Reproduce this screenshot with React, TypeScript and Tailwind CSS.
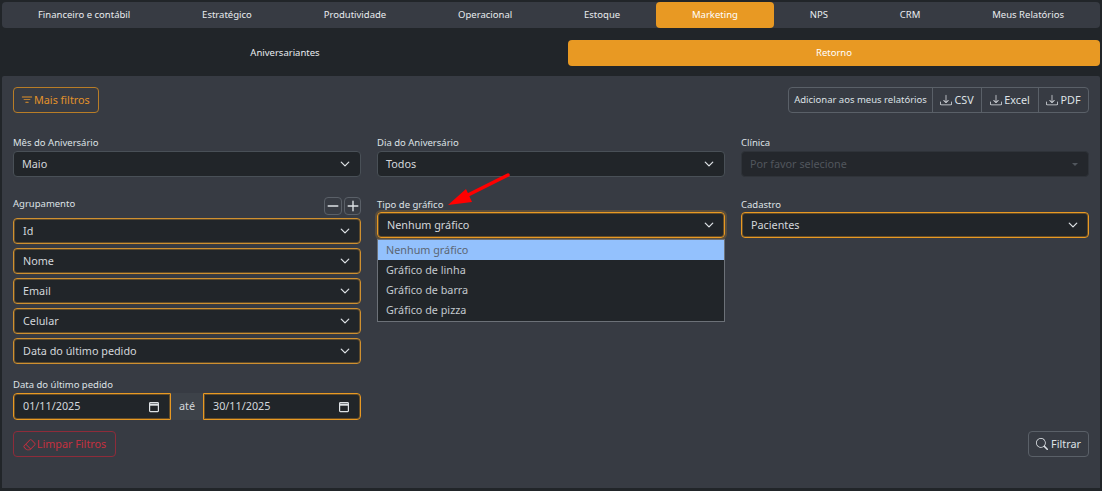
import { BsDash, BsDownload, BsEraser, BsFilter, BsPlus, BsSearch } from "react-icons/bs"

const tabs = ["Financeiro e contábil", "Estratégico", "Produtividade", "Operacional", "Estoque", "Marketing", "NPS", "CRM", "Meus Relatórios"]
const agrupamento = ["Id", "Nome", "Email", "Celular", "Data do último pedido"]
const graficos = ["Nenhum gráfico", "Gráfico de linha", "Gráfico de barra", "Gráfico de pizza"]

function Chevron() {
    return (
        <svg width="10" height="10" viewBox="0 0 16 16" fill="none" stroke="#dee2e6" strokeWidth="2" strokeLinecap="round" strokeLinejoin="round">
            <path d="m2 5 6 6 6-6" />
        </svg>
    )
}

function Calendar() {
    return (
        <svg width="12" height="12" viewBox="0 0 12 12" fill="none" stroke="#dee2e6" strokeWidth="1.2">
            <rect x="1.6" y="1.6" width="8.8" height="9" rx="0.8" />
            <path d="M1.6 3.7h8.8" strokeWidth="2" />
        </svg>
    )
}

function Select({ value, tone }: { value: string; tone?: "bright" | "dim" }) {
    const border =
        tone === "bright"
            ? "pl-[9px] border border-[#e89923] shadow-[inset_0_0_0_1px_rgba(232,153,35,0.35)]"
            : tone === "dim"
              ? "pl-[9px] border border-[#cf9030] shadow-[inset_0_0_0_1px_rgba(207,144,48,0.35)]"
              : "pl-[8px] border border-[#495057]"
    return (
        <div className={`h-[26px] flex items-center justify-between pr-[10px] rounded-[4px] bg-[#212529] text-[10.8px] text-[#d3d7db] ${border}`}>
            <span>{value}</span>
            <Chevron />
        </div>
    )
}

function Label({ children }: { children: string }) {
    return <div className="h-[15px] pt-[1px] text-[9.5px] leading-[14px] text-[#dee2e6]">{children}</div>
}

export default function App() {
    return (
        <div className="w-[1102px] h-[491px] overflow-hidden bg-[#212529] px-[2px] pt-[2px] font-['Noto_Sans',sans-serif]">
            {/* main tabs */}
            <div className="flex h-[26px] rounded-[4px] bg-[#373b43] text-[9.5px] text-[#e9ecef]">
                {tabs.map((t) => (
                    <div key={t} className={`flex-auto flex items-center justify-center rounded-[4px] px-[8px] ${t === "Marketing" ? "bg-[#e89923] text-white" : ""}`}>
                        {t}
                    </div>
                ))}
            </div>

            {/* sub tabs */}
            <div className="grid grid-cols-[566px_532px] h-[26px] mt-[12px] text-[9.5px] text-[#e9ecef]">
                <div className="flex items-center justify-center">Aniversariantes</div>
                <div className="flex items-center justify-center rounded-[4px] bg-[#e89923] text-white">Retorno</div>
            </div>

            {/* panel */}
            <div className="relative mt-[10px] h-[412px] rounded-t-[2px] bg-[#373b43] px-[11px] pt-[11px]">
                <div className="flex items-start justify-between">
                    <button className="h-[26px] w-[86px] flex items-center pl-[6px] rounded-[4px] border border-[#b87d27] text-[10.8px] text-[#e2922a]">
                        <BsFilter size={14} />
                        Mais filtros
                    </button>
                    <div className="flex h-[26px] rounded-[4px] border border-[#5a6068] text-[#dee2e6]">
                        <div className="w-[143px] flex items-center justify-center text-[9.5px]">Adicionar aos meus relatórios</div>
                        <div className="w-[49px] flex items-center justify-center gap-[2px] border-l border-[#5a6068] text-[10.8px]"><BsDownload size={12} />CSV</div>
                        <div className="w-[57px] flex items-center justify-center gap-[2px] border-l border-[#5a6068] text-[10.8px]"><BsDownload size={12} />Excel</div>
                        <div className="w-[50px] flex items-center justify-center gap-[2px] border-l border-[#5a6068] text-[10.8px]"><BsDownload size={12} />PDF</div>
                    </div>
                </div>

                <div className="grid grid-cols-3 gap-x-[16px] mt-[22px]">
                    <div>
                        <Label>Mês do Aniversário</Label>
                        <div className="mt-[1px]"><Select value="Maio" /></div>
                    </div>
                    <div>
                        <Label>Dia do Aniversário</Label>
                        <div className="mt-[1px]"><Select value="Todos" /></div>
                    </div>
                    <div>
                        <Label>Clínica</Label>
                        <div className="mt-[1px] h-[26px] flex items-center justify-between pl-[8px] pr-[10px] rounded-[4px] border border-[#2f3339] bg-[#24272c] text-[10.8px] text-[#51565d]">
                            <span>Por favor selecione</span>
                            <span className="border-x-[3px] border-t-[3px] border-x-transparent border-t-[#51565d]" />
                        </div>
                    </div>
                </div>

                <div className="grid grid-cols-3 gap-x-[16px] mt-[20px]">
                    <div>
                        <div className="flex items-start justify-between h-[18px]">
                            <div className="text-[9.5px] leading-[14px] text-[#dee2e6]">Agrupamento</div>
                            <div className="flex gap-[2px]">
                                <div className="w-[18px] h-[18px] flex items-center justify-center rounded-[4px] border border-[#5a6068] text-[#dee2e6]"><BsDash size={22} className="shrink-0" /></div>
                                <div className="w-[17px] h-[18px] flex items-center justify-center rounded-[4px] border border-[#5a6068] text-[#dee2e6]"><BsPlus size={22} className="shrink-0" /></div>
                            </div>
                        </div>
                        <div className="flex flex-col gap-[4px] mt-[3px]">
                            {agrupamento.map((a) => <Select key={a} value={a} tone="dim" />)}
                        </div>
                        <div className="mt-[13px]"><Label>Data do último pedido</Label></div>
                        <div className="flex mt-[1px] h-[27px] text-[10.8px] text-[#d3d7db]">
                            <div className="flex-1 flex items-center justify-between pl-[9px] pr-[10px] rounded-l-[4px] border border-[#e89923] shadow-[inset_0_0_0_1px_rgba(232,153,35,0.35)] bg-[#212529]">
                                <span>01/11/2025</span>
                                <Calendar />
                            </div>
                            <div className="w-[32px] flex items-center justify-center bg-[#3d4249]">até</div>
                            <div className="flex-1 flex items-center justify-between pl-[9px] pr-[10px] rounded-r-[4px] border border-[#e89923] shadow-[inset_0_0_0_1px_rgba(232,153,35,0.35)] bg-[#212529]">
                                <span>30/11/2025</span>
                                <Calendar />
                            </div>
                        </div>
                    </div>

                    <div className="relative">
                        <Label>Tipo de gráfico</Label>
                        <div className="rounded-[4px] shadow-[0_0_0_2px_rgba(232,153,35,0.2)]"><Select value="Nenhum gráfico" tone="bright" /></div>
                        <div className="absolute left-0 right-0 top-[42px] border border-[#6c7178] bg-[#212529] pb-[1px] text-[10.8px] leading-[20px] text-[#c3c9ce]">
                            {graficos.map((g, i) => (
                                <div key={g} className={`pl-[8px] ${i === 0 ? "bg-[#93c1fd] text-[#5c6673]" : ""}`}>{g}</div>
                            ))}
                        </div>
                    </div>

                    <div>
                        <Label>Cadastro</Label>
                        <Select value="Pacientes" tone="bright" />
                    </div>
                </div>

                <div className="flex items-start justify-between mt-[11px]">
                    <button className="h-[26px] w-[103px] flex items-center justify-center gap-[1px] rounded-[4px] border border-[#8e2c3a] text-[10.8px] text-[#c5303f]">
                        <BsEraser size={13} />
                        Limpar Filtros
                    </button>
                    <button className="h-[26px] w-[61px] flex items-center justify-center gap-[3px] rounded-[4px] border border-[#5a6068] text-[10.8px] text-[#dee2e6]">
                        <BsSearch size={12} />
                        Filtrar
                    </button>
                </div>

                {/* red annotation arrow */}
                <svg className="absolute left-[444px] top-[94px]" width="68" height="40" viewBox="0 0 68 40" fill="none">
                    <path d="M62 5 L22 25" stroke="#f00" strokeWidth="3.5" strokeLinecap="round" />
                    <path d="M2 35 L20 19 L26 32 Z" fill="#f00" />
                </svg>
            </div>
        </div>
    )
}
